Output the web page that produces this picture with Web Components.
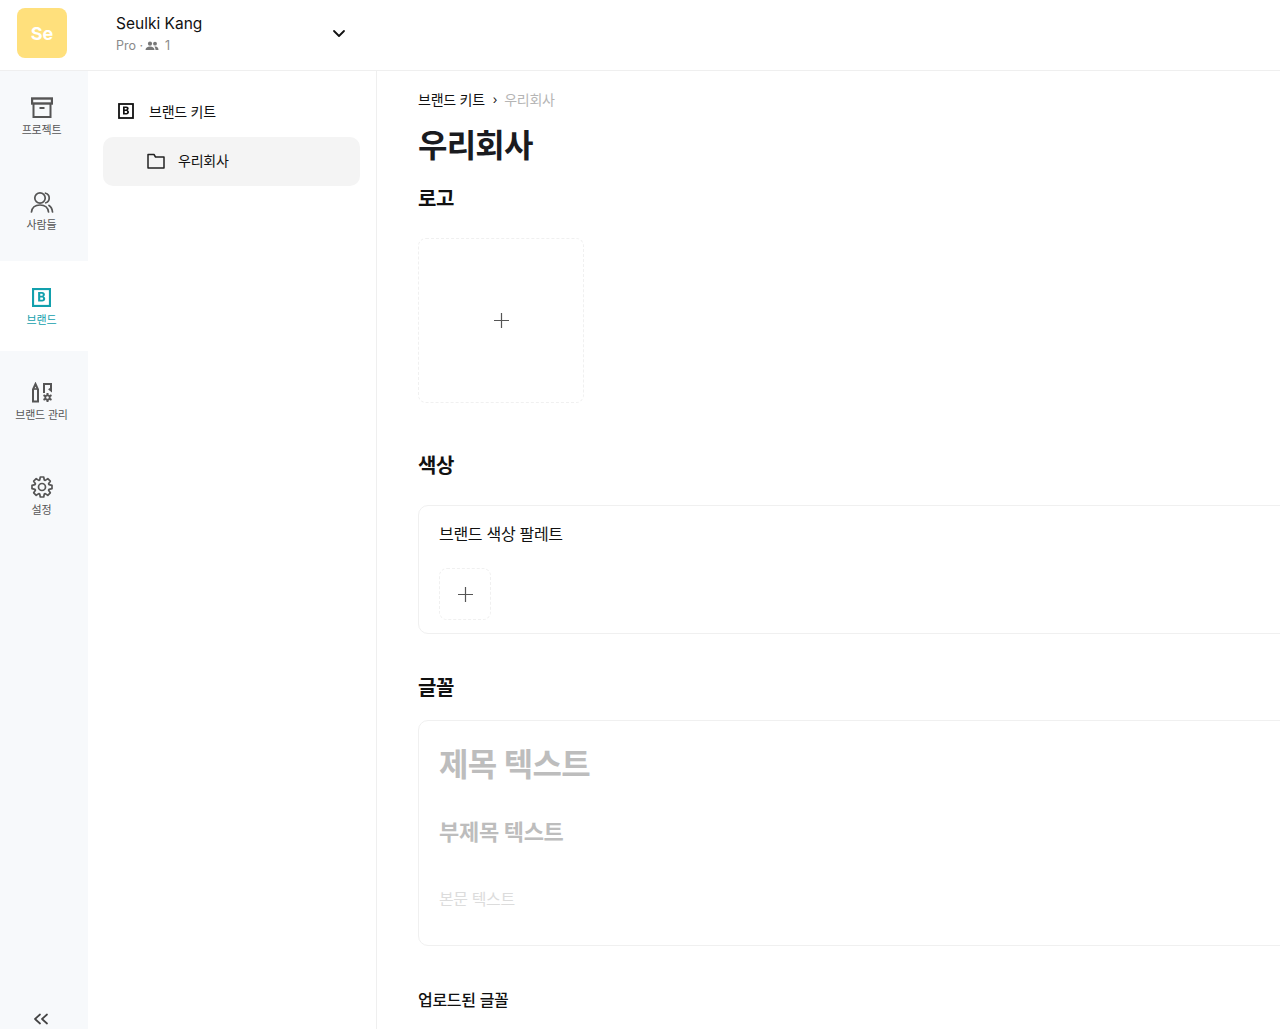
<!DOCTYPE html>
<html lang="ko">
<head>
<meta charset="utf-8">
<title>브랜드 키트</title>
<style>
  html, body { margin: 0; height: 100%; background: #fff; }
  body {
    font-family: Inter, "Noto Sans CJK KR", sans-serif;
    color: #111;
    overflow: hidden;
  }
</style>
</head>
<body>
<app-shell>
  <top-bar slot="top"></top-bar>
  <nav-rail slot="rail"></nav-rail>
  <kit-panel slot="panel"></kit-panel>
  <kit-main slot="main"></kit-main>
</app-shell>

<script>
class AppShell extends HTMLElement {
  connectedCallback() {
    const shadow = this.attachShadow({ mode: 'open' });
    shadow.innerHTML = `<style>
      :host { display: grid; grid-template-columns: 88px 289px 1fr; grid-template-rows: 71px 958px; width: 1280px; height: 1029px; overflow: hidden; }
      .top { grid-column: 1 / 4; display: block; min-width: 0; }
      .cell { min-width: 0; min-height: 0; overflow: hidden; }
    </style>
    <div class="top"><slot name="top"></slot></div>
    <div class="cell"><slot name="rail"></slot></div>
    <div class="cell"><slot name="panel"></slot></div>
    <div class="cell"><slot name="main"></slot></div>`;
  }
}

class TopBar extends HTMLElement {
  connectedCallback() {
    const shadow = this.attachShadow({ mode: 'open' });
    shadow.innerHTML = `<style>
      :host { display: flex; align-items: center; height: 71px; box-sizing: border-box; border-bottom: 1px solid #efefef; padding: 0 0 5px 17px; }
      .tile { width: 50px; height: 50px; box-sizing: border-box; padding-top: 2px; border-radius: 8px; background: #ffe07c; color: #fff; font-size: 18px; font-weight: 700; display: flex; align-items: center; justify-content: center; }
      .who { margin: 4px 0 0 49px; width: 216px; }
      .name { font-size: 15.5px; line-height: 20px; font-weight: 400; color: #111; margin-bottom: 3px; }
      .sub { display: flex; align-items: center; font-size: 12.5px; line-height: 18px; color: #8a8a8a; }
      .sub svg { margin: 0 6px 0 2px; }
      .chev { margin-top: 2px; }
    </style>
    <div class="tile">Se</div>
    <div class="who">
      <div class="name">Seulki Kang</div>
      <div class="sub">Pro ·<svg width="14" height="10" viewBox="0 0 14 10" fill="#777"><circle cx="5" cy="2.7" r="2.1"/><circle cx="10" cy="2.7" r="1.9"/><path d="M0.5 9c0-2.2 2-3.4 4.500-3.400S9.500 6.800 9.500 9z"/><path d="M10.500 5.600c1.800.1 3 1.200 3 3.400h-3c0-1.300-.3-2.500-1.200-3.200.4-.1.800-.2 1.200-.2z"/></svg>1</div>
    </div>
    <svg class="chev" width="14" height="9" viewBox="0 0 14 9" fill="none" stroke="#111" stroke-width="1.800" stroke-linecap="round" stroke-linejoin="round"><path d="M2 2l5 5 5-5"/></svg>`;
  }
}

class RailItem extends HTMLElement {
  connectedCallback() {
    const shadow = this.attachShadow({ mode: 'open' });
    shadow.innerHTML = `<style>
      :host { display: flex; flex-direction: column; align-items: center; height: 90px; box-sizing: border-box; padding: 25px 5px 0 0; background: #f7f9fb; color: #555; font-size: 11px; line-height: 16px; letter-spacing: -0.2px; }
      :host([active]) { background: #fff; color: #12a0ad; }
      .icon { display: flex; align-items: center; height: 22px; margin-bottom: 4px; }
    </style>
    <div class="icon"><slot name="icon"></slot></div>
    <slot></slot>`;
  }
}

class NavRail extends HTMLElement {
  connectedCallback() {
    const shadow = this.attachShadow({ mode: 'open' });
    shadow.innerHTML = `<style>
      :host { display: flex; flex-direction: column; height: 958px; width: 88px; background: #f7f9fb; }
      .list { display: flex; flex-direction: column; gap: 5px; flex: 1; }
      .foot { display: flex; justify-content: center; padding: 0 6px 4px 0; }
    </style>
    <div class="list">
      <rail-item><svg slot="icon" width="22" height="21" viewBox="0 0 22 21" fill="none" stroke="#555" stroke-width="2"><rect x="1" y="1.500" width="20" height="5" stroke-width="2.400"/><path d="M2.500 6.500V20h17V6.500"/><path d="M8.500 11h5"/></svg>프로젝트</rail-item>
      <rail-item><svg slot="icon" width="24" height="23" viewBox="0 0 24 23" fill="none" stroke="#555" stroke-width="1.700" stroke-linecap="round"><circle cx="10" cy="7" r="5.200"/><path d="M1.500 21c.5-4.500 4-7 8.500-7s8 2.500 8.500 7"/><path d="M15.500 2.200c2.300.6 3.700 2.500 3.700 4.800s-1.400 4.200-3.400 4.800"/><path d="M19 14.500c2 1.200 3.200 3.500 3.500 6.500"/></svg>사람들</rail-item>
      <rail-item active><svg slot="icon" width="19" height="19" viewBox="0 0 18 18" fill="none"><rect x="1" y="1" width="16" height="16" stroke="#12a0ad" stroke-width="2"/><path d="M5.800 3.800h3.700c1.700 0 2.700.9 2.700 2.300 0 .9-.5 1.600-1.300 1.900 1 .3 1.600 1.100 1.600 2.200 0 1.600-1.100 2.600-2.900 2.600H5.800z M7.800 5.500v1.900h1.400c.7 0 1-.3 1-1s-.4-.9-1-.9z M7.800 9v2.100h1.600c.7 0 1.100-.4 1.100-1s-.4-1.100-1.100-1.100z" fill="#12a0ad" fill-rule="evenodd"/></svg>브랜드</rail-item>
      <rail-item><svg slot="icon" width="22" height="21" viewBox="0 0 22 21" fill="none" stroke="#555" stroke-width="2"><path d="M2 7.500L4.500 2 7 7.500V19.500H2z" stroke-linejoin="miter"/><path d="M2 7h5" stroke-width="1.600"/><path d="M13 11V2h7v6.500l-2.200-1.800"/><g transform="translate(16.500 15.500)"><circle r="2.200" stroke-width="1.800"/><path d="M0-4.500v2M0 2.500v2M-4-2.300l1.800 1M2.200 1.300l1.800 1M-4 2.300l1.800-1M2.200-1.300l1.800-1" stroke-width="2"/></g></svg>브랜드 관리</rail-item>
      <rail-item><svg slot="icon" width="24" height="24" viewBox="0 0 24 24" fill="none" stroke="#555" stroke-width="1.700" stroke-linejoin="round"><circle cx="12" cy="12" r="3.500"/><path d="M10.300 2h3.400l.6 3 .9.400 2.600-1.700 2.500 2.500-1.700 2.600.4.900 3 .6v3.400l-3 .6-.4.900 1.700 2.600-2.500 2.500-2.600-1.700-.9.400-.6 3h-3.400l-.6-3-.9-.4-2.600 1.700-2.500-2.500 1.700-2.600-.4-.9-3-.6v-3.400l3-.6.400-.9-1.700-2.600 2.500-2.500 2.600 1.700.9-.4z"/></svg>설정</rail-item>
    </div>
    <div class="foot"><svg width="16" height="12" viewBox="0 0 16 12" fill="none" stroke="#444" stroke-width="1.700" stroke-linecap="round" stroke-linejoin="round"><path d="M7 1.500L2 6l5 4.500"/><path d="M14 1.500L9 6l5 4.500"/></svg></div>`;
  }
}

class KitPanel extends HTMLElement {
  connectedCallback() {
    const shadow = this.attachShadow({ mode: 'open' });
    shadow.innerHTML = `<style>
      :host { display: block; height: 958px; box-sizing: border-box; border-right: 1px solid #efefef; padding: 24px 16px 0 15px; font-size: 14px; color: #111; letter-spacing: -0.25px; }
      .row { display: flex; align-items: center; }
      .kit { height: 32px; padding-left: 15px; gap: 15px; margin-bottom: 10px; }
      .sel { height: 49px; box-sizing: border-box; border-radius: 10px; background: #f4f4f4; padding: 0 0 2px 44px; gap: 13px; }
      .sel span { margin-top: -2px; }
    </style>
    <div class="row kit"><svg width="16" height="16" viewBox="0 0 16 16" fill="none"><rect x="1" y="1" width="14" height="14" stroke="#111" stroke-width="1.800"/><path d="M5 3.500h3.300c1.500 0 2.400.8 2.400 2 0 .8-.4 1.400-1.100 1.700.9.300 1.400 1 1.400 1.900 0 1.500-1 2.400-2.600 2.400H5z M6.700 5v1.600H8c.6 0 .9-.3.900-.8S8.600 5 8 5z M6.700 8v1.900h1.500c.6 0 1-.4 1-1s-.4-.9-1-.9z" fill="#111" fill-rule="evenodd"/></svg><span>브랜드 키트</span></div>
    <div class="row sel"><svg width="18" height="16" viewBox="0 0 18 16" fill="none" stroke="#222" stroke-width="1.500" stroke-linejoin="round"><path d="M1 1.500h6l1.500 2.500H17v11H1z"/></svg><span>우리회사</span></div>`;
  }
}

class SectionTitle extends HTMLElement {
  connectedCallback() {
    const shadow = this.attachShadow({ mode: 'open' });
    shadow.innerHTML = `<style>
      :host { display: block; font-size: 20px; line-height: 26px; font-weight: 700; color: #111; letter-spacing: -0.4px; }
    </style><slot></slot>`;
  }
}

class AddTile extends HTMLElement {
  connectedCallback() {
    const shadow = this.attachShadow({ mode: 'open' });
    shadow.innerHTML = `<style>
      :host { display: flex; align-items: center; justify-content: center; box-sizing: border-box; width: var(--size, 52px); height: var(--tall, var(--size, 52px)); border: 1px dashed #f0f0f0; border-radius: 8px; }
    </style>
    <svg width="15" height="15" viewBox="0 0 15 15" stroke="#555" stroke-width="1.200"><path d="M7.500 0v15M0 7.500h15"/></svg>`;
  }
}

class KitCard extends HTMLElement {
  connectedCallback() {
    const shadow = this.attachShadow({ mode: 'open' });
    shadow.innerHTML = `<style>
      :host { display: block; box-sizing: border-box; width: 1000px; border: 1px solid #f0f0f0; border-radius: 10px; padding: 0 20px; }
    </style><slot></slot>`;
  }
}

class KitMain extends HTMLElement {
  connectedCallback() {
    const shadow = this.attachShadow({ mode: 'open' });
    shadow.innerHTML = `<style>
      :host { display: block; height: 958px; padding-left: 41px; overflow: hidden; color: #111; }
      .crumb { display: flex; align-items: center; height: 20px; margin-top: 18px; font-size: 14px; letter-spacing: -0.25px; }
      .crumb i { font-style: normal; font-size: 12px; margin: 0 7px 0 8px; }
      .crumb span { color: #b5b5b5; }
      h1 { margin: 14px 0 0; font-size: 32px; line-height: 46px; font-weight: 700; color: #1a1b1f; letter-spacing: -0.8px; }
      .s-logo { margin-top: 17px; }
      .logo { --size: 166px; --tall: 165px; margin-top: 26px; }
      .s-color { margin-top: 50px; }
      .palette { margin-top: 26px; height: 129px; }
      .palette p { margin: 18px 0 24px; font-size: 16px; line-height: 20px; letter-spacing: -0.3px; }
      .s-font { margin-top: 41px; }
      .fonts { margin-top: 19px; height: 226px; color: #bdbdbd; }
      .h { font-size: 32px; line-height: 46px; font-weight: 700; padding-top: 21px; letter-spacing: -0.6px; }
      .sh { font-size: 22px; line-height: 32px; font-weight: 700; margin-top: 28px; letter-spacing: -0.3px; }
      .b { font-size: 16px; line-height: 24px; color: #dcdcdc; margin-top: 39px; letter-spacing: -0.4px; }
      .up { margin-top: 42px; font-size: 16px; line-height: 24px; font-weight: 500; letter-spacing: -0.3px; }
    </style>
    <div class="crumb">브랜드 키트<i>›</i><span>우리회사</span></div>
    <h1>우리회사</h1>
    <section-title class="s-logo">로고</section-title>
    <add-tile class="logo"></add-tile>
    <section-title class="s-color">색상</section-title>
    <kit-card class="palette">
      <p>브랜드 색상 팔레트</p>
      <add-tile></add-tile>
    </kit-card>
    <section-title class="s-font">글꼴</section-title>
    <kit-card class="fonts">
      <div class="h">제목 텍스트</div>
      <div class="sh">부제목 텍스트</div>
      <div class="b">본문 텍스트</div>
    </kit-card>
    <div class="up">업로드된 글꼴</div>`;
  }
}

customElements.define('app-shell', AppShell);
customElements.define('top-bar', TopBar);
customElements.define('rail-item', RailItem);
customElements.define('nav-rail', NavRail);
customElements.define('kit-panel', KitPanel);
customElements.define('section-title', SectionTitle);
customElements.define('add-tile', AddTile);
customElements.define('kit-card', KitCard);
customElements.define('kit-main', KitMain);
</script>
</body>
</html>
